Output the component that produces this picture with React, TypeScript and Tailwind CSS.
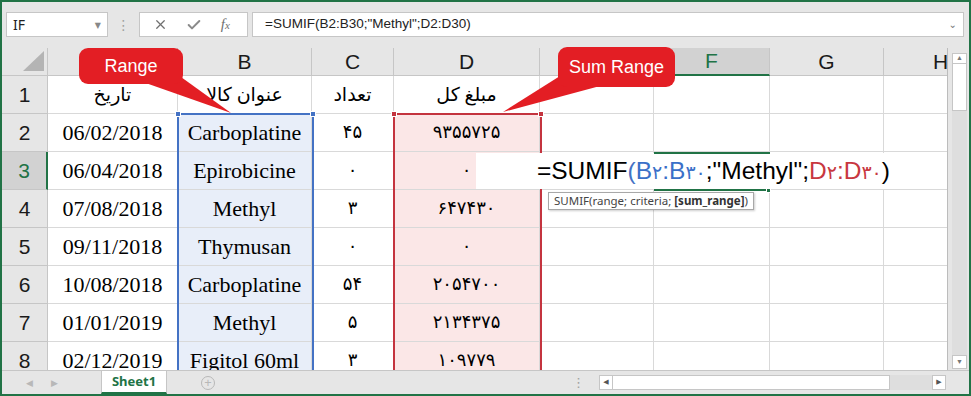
import { Check, X } from "lucide-react";

const COLS = ["A", "B", "C", "D", "E", "F", "G", "H"];

const HEADINGS = ["تاریخ", "عنوان کالا", "تعداد", "مبلغ کل"];

const ROWS = [
  ["06/02/2018", "Carboplatine", "۴۵", "۹۳۵۵۷۲۵"],
  ["06/04/2018", "Epirobicine", "۰", "۰"],
  ["07/08/2018", "Methyl", "۳", "۶۴۷۴۳۰"],
  ["09/11/2018", "Thymusan", "۰", "۰"],
  ["10/08/2018", "Carboplatine", "۵۴", "۲۰۵۴۷۰۰"],
  ["01/01/2019", "Methyl", "۵", "۲۱۳۴۳۷۵"],
  ["02/12/2019", "Figitol 60ml", "۳", "۱۰۹۷۷۹"],
];

const serif = "font-['Liberation_Serif','DejaVu_Sans',serif]";
const sans = "font-['Liberation_Sans','DejaVu_Sans',sans-serif]";
const ui = "font-['Noto_Sans','DejaVu_Sans',sans-serif]";

const FormulaBar = () => (
  <div className={`flex h-[46px] shrink-0 items-start pt-[10px] ${ui}`}>
    <div className="ml-[4px] flex h-[25px] w-[102px] items-center justify-between border border-[#c6c6c6] bg-white pl-[6px] pr-[6px] text-[14px] text-[#222]">
      <span>IF</span>
      <span className="text-[8px] text-[#888]">▼</span>
    </div>
    <div className="flex h-[25px] w-[31px] items-center justify-center text-[14px] leading-none text-[#a0a0a0]">⋮</div>
    <div className="flex h-[25px] w-[109px] items-center justify-around border border-[#c6c6c6] bg-white pl-[4px] pr-[8px] text-[#6f6f6f]">
      <X className="size-[15px]" strokeWidth={2} />
      <Check className="size-[16px] text-[#8a8a8a]" strokeWidth={3} />
      <span className="font-['Liberation_Serif',serif] text-[15px] italic leading-none">
        f<span className="text-[11px]">x</span>
      </span>
    </div>
    <div className={`ml-[4px] flex h-[25px] w-[712px] items-center justify-between border border-[#c6c6c6] bg-white pl-[12px] pr-[6px] text-[13.5px] text-[#222] ${sans}`}>
      <span>=SUMIF(B2:B30;"Methyl";D2:D30)</span>
      <span className="text-[10px] text-[#777]">⌄</span>
    </div>
  </div>
);

const Sheet = () => (
  <div className="relative h-[322px] w-[946px] shrink-0 overflow-hidden border-r border-[#bcbcbc] bg-white">
    <div className="grid w-[996px] grid-cols-[46px_130px_134px_82px_146px_114px_116px_114px_114px] grid-rows-[28px_repeat(8,38px)]">
      <div className="relative border-b border-r border-[#c6c6c6] bg-[#e6e6e6]">
        <svg className="absolute bottom-[4px] right-[3px]" width="21" height="20" viewBox="0 0 21 20">
          <polygon points="21,0 21,20 0,20" fill="#b4b4b4" />
        </svg>
      </div>
      {COLS.map((c) =>
        c === "F" ? (
          <div
            key={c}
            className={`flex items-center justify-center border-b-2 border-r border-b-[#217346] border-r-[#c6c6c6] bg-[#d2d2d2] text-[21px] text-[#217346] ${sans}`}
          >
            {c}
          </div>
        ) : (
          <div
            key={c}
            className={`flex items-center justify-center border-b border-r border-[#c6c6c6] bg-[#e6e6e6] text-[21px] text-[#1a1a1a] ${sans}`}
          >
            {c}
          </div>
        ),
      )}

      {[HEADINGS, ...ROWS].map((row, r) => (
        <Row key={r} n={r + 1} cells={row} />
      ))}
    </div>

    {/* range outlines */}
    <div className="absolute left-[175px] top-[65px] h-[300px] w-[137px] border-2 border-[#4472c4]">
      <span className="absolute -left-[4px] -top-[4px] size-[6px] border border-white bg-[#4472c4]" />
      <span className="absolute -right-[4px] -top-[4px] size-[6px] border border-white bg-[#4472c4]" />
    </div>
    <div className="absolute left-[391px] top-[65px] h-[300px] w-[149px] border-2 border-[#c4343f]">
      <span className="absolute -left-[4px] -top-[4px] size-[6px] border border-white bg-[#c4343f]" />
      <span className="absolute -right-[4px] -top-[4px] size-[6px] border border-white bg-[#c4343f]" />
    </div>

    {/* in-cell editing of F3 */}
    <div className={`absolute left-[474px] top-[105px] flex h-[36px] w-[424px] items-center justify-end bg-white pr-[10px] text-[24.5px] text-black ${sans}`}>
      <span>=SUMIF</span>
      <span className="text-[#4472c4]">(</span>
      <span className="text-[#3a70c8]">
        B<span className="text-[19px]">۲</span>:B<span className="text-[19px]">۳۰</span>
      </span>
      <span>;"Methyl";</span>
      <span className="text-[#c8373f]">
        D<span className="text-[19px]">۲</span>:D<span className="text-[19px]">۳۰</span>
      </span>
      <span>)</span>
    </div>
    <div className="absolute left-[652px] top-[104px] h-[2px] w-[116px] bg-[#217346]" />
    <div className="absolute left-[652px] top-[141px] h-[2px] w-[112px] bg-[#217346]" />
    <div className="absolute left-[764px] top-[140px] size-[5px] border border-white bg-[#217346]" />

    <div className={`absolute left-[546px] top-[144px] flex h-[18px] items-center border border-[#a8a8a8] bg-white px-[5px] text-[11.5px] text-[#444] shadow-[1px_1px_2px_rgba(0,0,0,0.2)] ${ui}`}>
      SUMIF(range; criteria;&nbsp;<b className="text-[#333]">[sum_range]</b>)
    </div>
  </div>
);

const Row = ({ n, cells }: { n: number; cells: string[] }) => {
  const head = n === 1;
  return (
    <>
      {n === 3 ? (
        <div className={`flex items-center justify-center border-b border-r-2 border-b-[#c6c6c6] border-r-[#217346] bg-[#d2d2d2] text-[21px] text-[#217346] ${sans}`}>
          {n}
        </div>
      ) : (
        <div className={`flex items-center justify-center border-b border-r border-[#c6c6c6] bg-[#e6e6e6] text-[21px] text-[#1a1a1a] ${sans}`}>
          {n}
        </div>
      )}
      {cells.map((v, i) => {
        let bg = "bg-white";
        if (!head && i === 1) bg = "bg-[#e8eef9]";
        if (!head && i === 3) bg = "bg-[#fbe7e7]";
        let size = "text-[22px]";
        if (head) size = "text-[19px] pt-[2px]";
        else if (i >= 2) size = "text-[18px]";
        return (
          <div
            key={i}
            className={`flex items-center justify-center border-b border-r border-[#d9d9d9] text-black ${bg} ${serif} ${size}`}
          >
            {v}
          </div>
        );
      })}
      {[0, 1, 2, 3].map((k) => (
        <div key={`e${k}`} className="border-b border-r border-[#d9d9d9] bg-white" />
      ))}
    </>
  );
};

const VScroll = () => (
  <div className="ml-[4px] flex h-[322px] w-[15px] flex-col bg-[#e6e6e6] pb-[1px] pt-[5px]">
    <div className="flex h-[11px] items-center justify-center border border-[#c6c6c6] bg-white text-[7px] text-[#777]">▲</div>
    <div className="h-[47px] border border-t-0 border-[#c6c6c6] bg-white" />
    <div className="flex-1 bg-[#dedede]" />
    <div className="flex h-[14px] items-center justify-center border border-[#c6c6c6] bg-white text-[7px] text-[#777]">▼</div>
  </div>
);

const TabBar = () => (
  <div className={`flex h-[24px] shrink-0 items-stretch border-t border-[#c6c6c6] bg-[#e6e6e6] ${ui}`}>
    <div className="flex w-[99px] items-center pl-[24px] text-[9px] text-[#b8b8b8]">
      <span>◀</span>
      <span className="ml-[18px]">▶</span>
    </div>
    <div className="flex w-[66px] items-center justify-center border-b-2 border-l border-r border-b-[#217346] border-l-[#c6c6c6] border-r-[#c6c6c6] bg-white text-[13px] font-bold text-[#217346]">
      Sheet1
    </div>
    <div className="flex w-[82px] items-center justify-center">
      <span className="flex size-[14px] items-center justify-center rounded-full border border-[#b8b8b8] text-[13px] leading-none text-[#b8b8b8]">+</span>
    </div>
    <div className="flex w-[350px] items-center justify-end pr-[14px] text-[13px] text-[#a0a0a0]">⋮</div>
    <div className="flex items-center">
      <div className="flex h-[15px] w-[14px] items-center justify-center border border-[#c6c6c6] bg-white text-[7px] text-[#555]">◀</div>
      <div className="h-[15px] w-[277px] border border-l-0 border-[#c6c6c6] bg-white" />
      <div className="h-[15px] w-[42px] bg-[#dedede]" />
      <div className="flex h-[15px] w-[14px] items-center justify-center border border-[#c6c6c6] bg-white text-[7px] text-[#555]">▶</div>
    </div>
  </div>
);

const Callouts = () => (
  <>
    <svg className="pointer-events-none absolute left-0 top-0" width="967" height="392" viewBox="2 2 967 392">
      <polygon points="140,81 181,77 231,113" fill="#e31e24" />
      <polygon points="560,76 600,86 503,112" fill="#e31e24" />
    </svg>
    <div className={`absolute left-[77px] top-[46px] flex h-[36px] w-[104px] items-center justify-center rounded-[9px] bg-[#e31e24] text-[18px] text-white ${sans}`}>
      Range
    </div>
    <div className={`absolute left-[556px] top-[45px] flex h-[40px] w-[117px] items-center justify-center rounded-[9px] bg-[#e31e24] text-[18px] text-white ${sans}`}>
      Sum Range
    </div>
  </>
);

export default function App() {
  return (
    <div className="relative flex h-[396px] w-[971px] flex-col overflow-hidden border-2 border-[#217346] bg-[#e6e6e6]">
      <FormulaBar />
      <div className="flex">
        <Sheet />
        <VScroll />
      </div>
      <TabBar />
      <Callouts />
    </div>
  );
}
